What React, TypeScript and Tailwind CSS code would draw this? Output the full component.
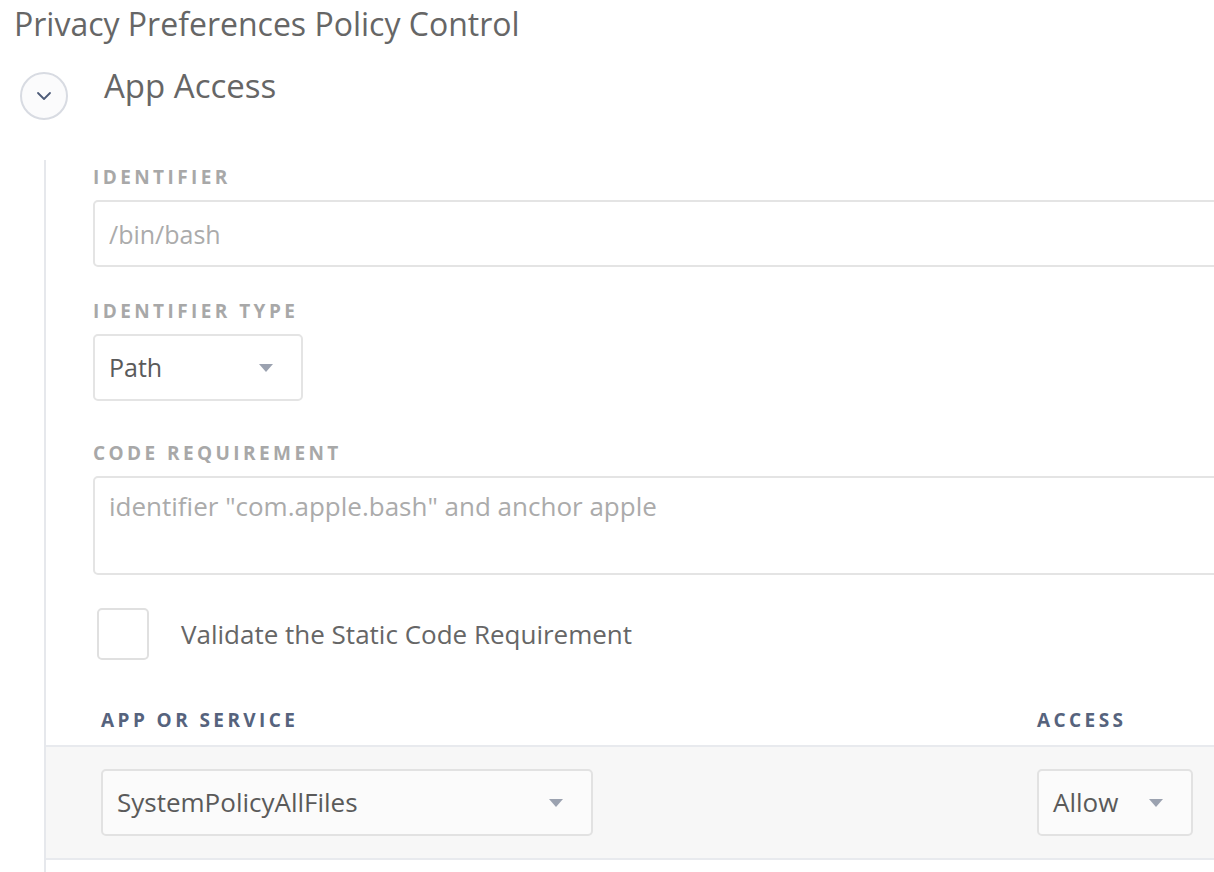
import { ChevronDown } from 'lucide-react';

const font = { fontFamily: '"Open Sans", Lato, sans-serif' };

function Caret() {
    return (
        <svg width="14" height="8" viewBox="0 0 14 8" className="shrink-0">
            <path d="M0 0 L14 0 L7 8 Z" fill="#9ba2b0" />
        </svg>
    );
}

function FieldLabel({ children }: { children: React.ReactNode }) {
    return (
        <div className="h-5 leading-5 text-[19px] font-bold tracking-[0.18em] uppercase text-[#a8a8a8]">
            {children}
        </div>
    );
}

export default function App() {
    return (
        <div className="w-[1214px] h-[872px] overflow-hidden bg-white text-[#5f5f5f]" style={font}>
            {/* Title */}
            <h1 className="pl-[14px] h-[48px] leading-[48px] text-[32px] text-[#666]">
                Privacy Preferences Policy Control
            </h1>

            {/* Section header */}
            <div className="flex items-start pl-[20px] h-[72px] pt-[24px]">
                <button className="w-[48px] h-[48px] rounded-full border-2 border-[#d8dbe2] bg-[#fbfbfc] flex items-center justify-center">
                    <ChevronDown className="w-[24px] h-[24px] text-[#4d5b78]" strokeWidth={1.8} />
                </button>
                <span className="ml-[36px] -mt-[6px] text-[33px] leading-[40px] text-[#666]">App Access</span>
            </div>

            {/* Body */}
            <div className="ml-[44px] mt-[40px] border-l-2 border-[#e6e8ec] w-[1400px] pt-[7px] pb-[40px]">
                <div className="pl-[47px]">
                    <FieldLabel>Identifier</FieldLabel>
                    <input
                        className="mt-[13px] block w-[1300px] h-[67px] rounded-[5px] border-2 border-[#e4e4e4] px-[14px] text-[25px] placeholder:text-[#ababab] outline-none"
                        placeholder="/bin/bash"
                    />

                    <div className="mt-[34px]">
                        <FieldLabel>Identifier Type</FieldLabel>
                    </div>
                    <div className="mt-[13px] w-[210px] h-[67px] rounded-[5px] border-2 border-[#e4e4e4] pl-[14px] pr-[28px] flex items-center justify-between text-[25px] text-[#5a5a5a]">
                        <span>Path</span>
                        <Caret />
                    </div>

                    <div className="mt-[42px]">
                        <FieldLabel>Code Requirement</FieldLabel>
                    </div>
                    <textarea
                        className="mt-[13px] block w-[1300px] h-[99px] resize-none rounded-[5px] border-2 border-[#e4e4e4] px-[14px] pt-[12px] text-[26px] leading-[32px] placeholder:text-[#ababab] outline-none"
                        placeholder={'identifier "com.apple.bash" and anchor apple'}
                    />

                    <label className="mt-[33px] flex items-center">
                        <span className="ml-[4px] w-[52px] h-[52px] rounded-[5px] border-2 border-[#e0e0e0] bg-white" />
                        <span className="ml-[32px] text-[26px] text-[#666]">Validate the Static Code Requirement</span>
                    </label>
                </div>

                {/* App or service table */}
                <div className="mt-[50px]">
                    <div className="flex pl-[55px] pb-[15px] h-[35px] text-[19px] leading-5 font-bold tracking-[0.18em] uppercase text-[#56637d]">
                        <div className="w-[936px]">App or Service</div>
                        <div>Access</div>
                    </div>
                    <div className="border-y-2 border-[#e8eaee] bg-[#f7f7f7] h-[115px] flex items-center pl-[55px]">
                        <div className="w-[492px] h-[67px] rounded-[5px] border-2 border-[#e2e2e2] bg-[#fbfbfb] pl-[14px] pr-[28px] flex items-center justify-between text-[26px] text-[#5a5a5a]">
                            <span>SystemPolicyAllFiles</span>
                            <Caret />
                        </div>
                        <div className="ml-[444px] w-[156px] h-[67px] rounded-[5px] border-2 border-[#e2e2e2] bg-[#fbfbfb] pl-[14px] pr-[28px] flex items-center justify-between text-[26px] text-[#5a5a5a]">
                            <span>Allow</span>
                            <Caret />
                        </div>
                    </div>
                </div>
            </div>
        </div>
    );
}
